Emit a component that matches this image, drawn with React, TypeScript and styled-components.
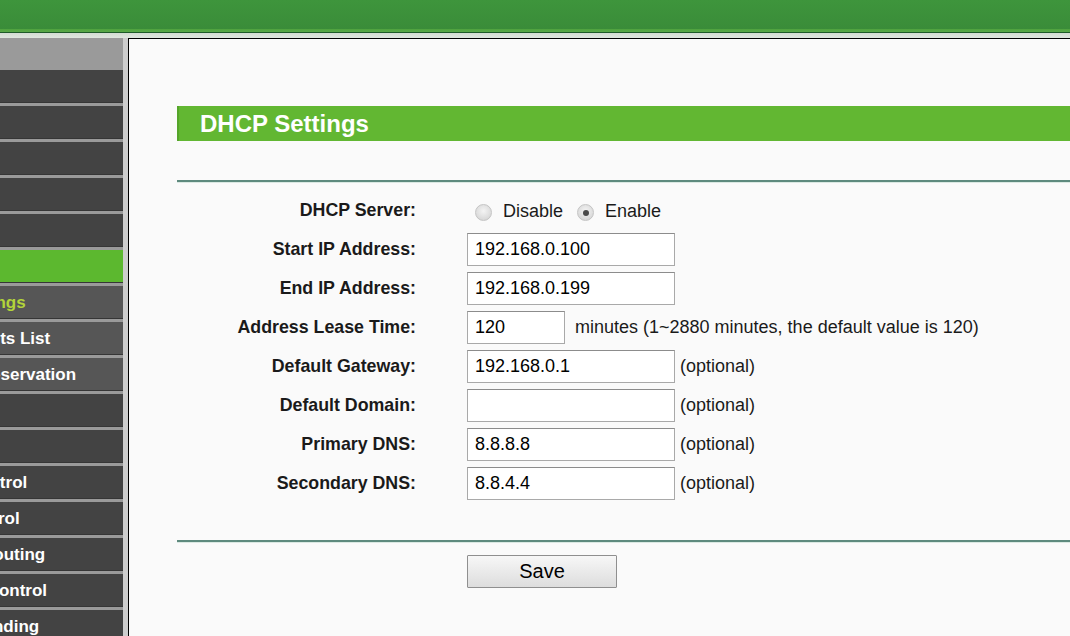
import React from "react";
import styled, { createGlobalStyle } from "styled-components";

const GlobalStyle = createGlobalStyle`
  html, body {
    margin: 0;
    padding: 0;
    background: #fafafa;
    font-family: "Liberation Sans", Arial, sans-serif;
  }
`;

const Page = styled.div`
  width: 1070px;
  height: 636px;
  display: flex;
  flex-direction: column;
  overflow: hidden;
`;

const TopBar = styled.div`
  height: 38px;
  flex: none;
  background: linear-gradient(
    to bottom,
    #3e953c 0,
    #3a8c39 29px,
    #4fa23f 29px,
    #58a846 32px,
    #1d5a28 32px,
    #1d5a28 33px,
    #d3dbd2 33px,
    #dfe6de 38px
  );
`;

const Body = styled.div`
  flex: 1;
  display: flex;
  min-height: 0;
`;

const Sidebar = styled.nav`
  width: 128px;
  flex: none;
  box-sizing: border-box;
  background: #9a9a9a;
  border-right: 5px solid #cdcdcd;
  padding-top: 32px;
  overflow: hidden;
`;

// the menu is scrolled sideways, so only the tail of each label shows
const MenuList = styled.div`
  margin-left: -120px;
  width: 243px;
  display: flex;
  flex-direction: column;
  gap: 3px;
`;

const MenuItem = styled.div<{ $sub?: boolean; $active?: boolean; $open?: boolean }>`
  height: 33px;
  flex: none;
  box-sizing: border-box;
  padding-left: ${(p) => (p.$sub ? "26px" : "15px")};
  line-height: 33px;
  white-space: nowrap;
  font-size: 17px;
  font-weight: bold;
  color: ${(p) => (p.$active ? "#b2d43a" : "#ffffff")};
  background: ${(p) => (p.$open ? "#5cb82f" : p.$sub ? "#565656" : "#434343")};
  border-bottom: 1px solid #363636;
`;

const Content = styled.main`
  flex: 1;
  min-width: 0;
  border-left: 1px solid #000;
  border-top: 1px solid #000;
  background: #fafafa;
  padding: 67px 0 0 48px;
`;

const TitleBar = styled.h1`
  margin: 0;
  height: 35px;
  line-height: 35px;
  padding-left: 21px;
  background: #62b732;
  border-left: 2px solid #55a52a;
  color: #ffffff;
  font-size: 24px;
  font-weight: bold;
`;

const Divider = styled.div<{ $top: number }>`
  margin-top: ${(p) => p.$top}px;
  height: 2px;
  background: #5e8a7e;
  border-bottom: 1px solid #dbe9e3;
`;

const Form = styled.div`
  margin-top: 11px;
  display: grid;
  grid-template-columns: 239px 1fr;
  column-gap: 51px;
  row-gap: 6px;
`;

const Label = styled.div`
  height: 33px;
  line-height: 33px;
  text-align: right;
  font-size: 17.8px;
  font-weight: bold;
  color: #1a1a1a;
  white-space: nowrap;
`;

const Field = styled.div`
  height: 33px;
  display: flex;
  align-items: center;
  font-size: 18px;
  color: #1a1a1a;
  white-space: nowrap;
`;

const TextBox = styled.input<{ $w?: number }>`
  width: ${(p) => p.$w ?? 208}px;
  height: 33px;
  box-sizing: border-box;
  margin: 0;
  padding: 0 0 0 7px;
  border: 1px solid #a9a9a9;
  border-top-color: #8c8c8c;
  background: #ffffff;
  font-family: "Liberation Sans", Arial, sans-serif;
  font-size: 18px;
  color: #000;
  outline: none;
`;

const Note = styled.span<{ $gap: number }>`
  margin-left: ${(p) => p.$gap}px;
`;

const RadioLabel = styled.label<{ $first?: boolean }>`
  display: flex;
  align-items: center;
  margin-left: ${(p) => (p.$first ? "8px" : "14px")};
  gap: 11px;
  padding-top: 1px;
`;

const Radio = styled.input.attrs({ type: "radio" })`
  appearance: none;
  margin: 3px 0 0 0;
  width: 17px;
  height: 17px;
  border-radius: 50%;
  border: 1px solid #c4c4c4;
  background: radial-gradient(circle at 50% 40%, #f4f4f4 0, #dadada 70%, #cfcfcf 100%);
  position: relative;
  &:checked::after {
    content: "";
    position: absolute;
    left: 5px;
    top: 5px;
    width: 6px;
    height: 6px;
    border-radius: 50%;
    background: #4a4a4a;
  }
`;

const SaveButton = styled.button`
  margin: 12px 0 0 290px;
  width: 150px;
  height: 33px;
  border: 1px solid #8f8f8f;
  border-radius: 1px;
  background: linear-gradient(to bottom, #f7f7f7, #dddddd);
  font-family: "Liberation Sans", Arial, sans-serif;
  font-size: 20px;
  color: #000;
  padding: 0;
`;

const menu = [
  { text: "Status" },
  { text: "Quick Setup" },
  { text: "WPS" },
  { text: "Network" },
  { text: "Wireless" },
  { text: "DHCP", open: true },
  { text: "DHCP Settings", sub: true, active: true },
  { text: "DHCP Clients List", sub: true },
  { text: "Address Reservation", sub: true },
  { text: "Forwarding" },
  { text: "Security" },
  { text: "Parental Control" },
  { text: "Access Control" },
  { text: "Advanced Routing" },
  { text: "Bandwidth Control" },
  { text: "IP & MAC Binding" },
];

const fields = [
  { label: "Start IP Address:", value: "192.168.0.100" },
  { label: "End IP Address:", value: "192.168.0.199" },
  {
    label: "Address Lease Time:",
    value: "120",
    width: 98,
    note: "minutes (1~2880 minutes, the default value is 120)",
    gap: 10,
  },
  { label: "Default Gateway:", value: "192.168.0.1", note: "(optional)", gap: 5 },
  { label: "Default Domain:", value: "", note: "(optional)", gap: 5 },
  { label: "Primary DNS:", value: "8.8.8.8", note: "(optional)", gap: 5 },
  { label: "Secondary DNS:", value: "8.8.4.4", note: "(optional)", gap: 5 },
];

const App: React.FC = () => {
  return (
    <Page>
      <GlobalStyle />
      <TopBar />
      <Body>
        <Sidebar>
          <MenuList>
            {menu.map((m) => (
              <MenuItem key={m.text} $sub={m.sub} $active={m.active} $open={m.open}>
                {m.text}
              </MenuItem>
            ))}
          </MenuList>
        </Sidebar>
        <Content>
          <TitleBar>DHCP Settings</TitleBar>
          <Divider $top={39} />
          <Form>
            <Label>DHCP Server:</Label>
            <Field>
              <RadioLabel $first>
                <Radio name="dhcp" />
                Disable
              </RadioLabel>
              <RadioLabel>
                <Radio name="dhcp" defaultChecked />
                Enable
              </RadioLabel>
            </Field>
            {fields.map((f) => (
              <React.Fragment key={f.label}>
                <Label>{f.label}</Label>
                <Field>
                  <TextBox $w={f.width} defaultValue={f.value} />
                  {f.note && <Note $gap={f.gap ?? 5}>{f.note}</Note>}
                </Field>
              </React.Fragment>
            ))}
          </Form>
          <Divider $top={40} />
          <SaveButton>Save</SaveButton>
        </Content>
      </Body>
    </Page>
  );
};

export default App;
